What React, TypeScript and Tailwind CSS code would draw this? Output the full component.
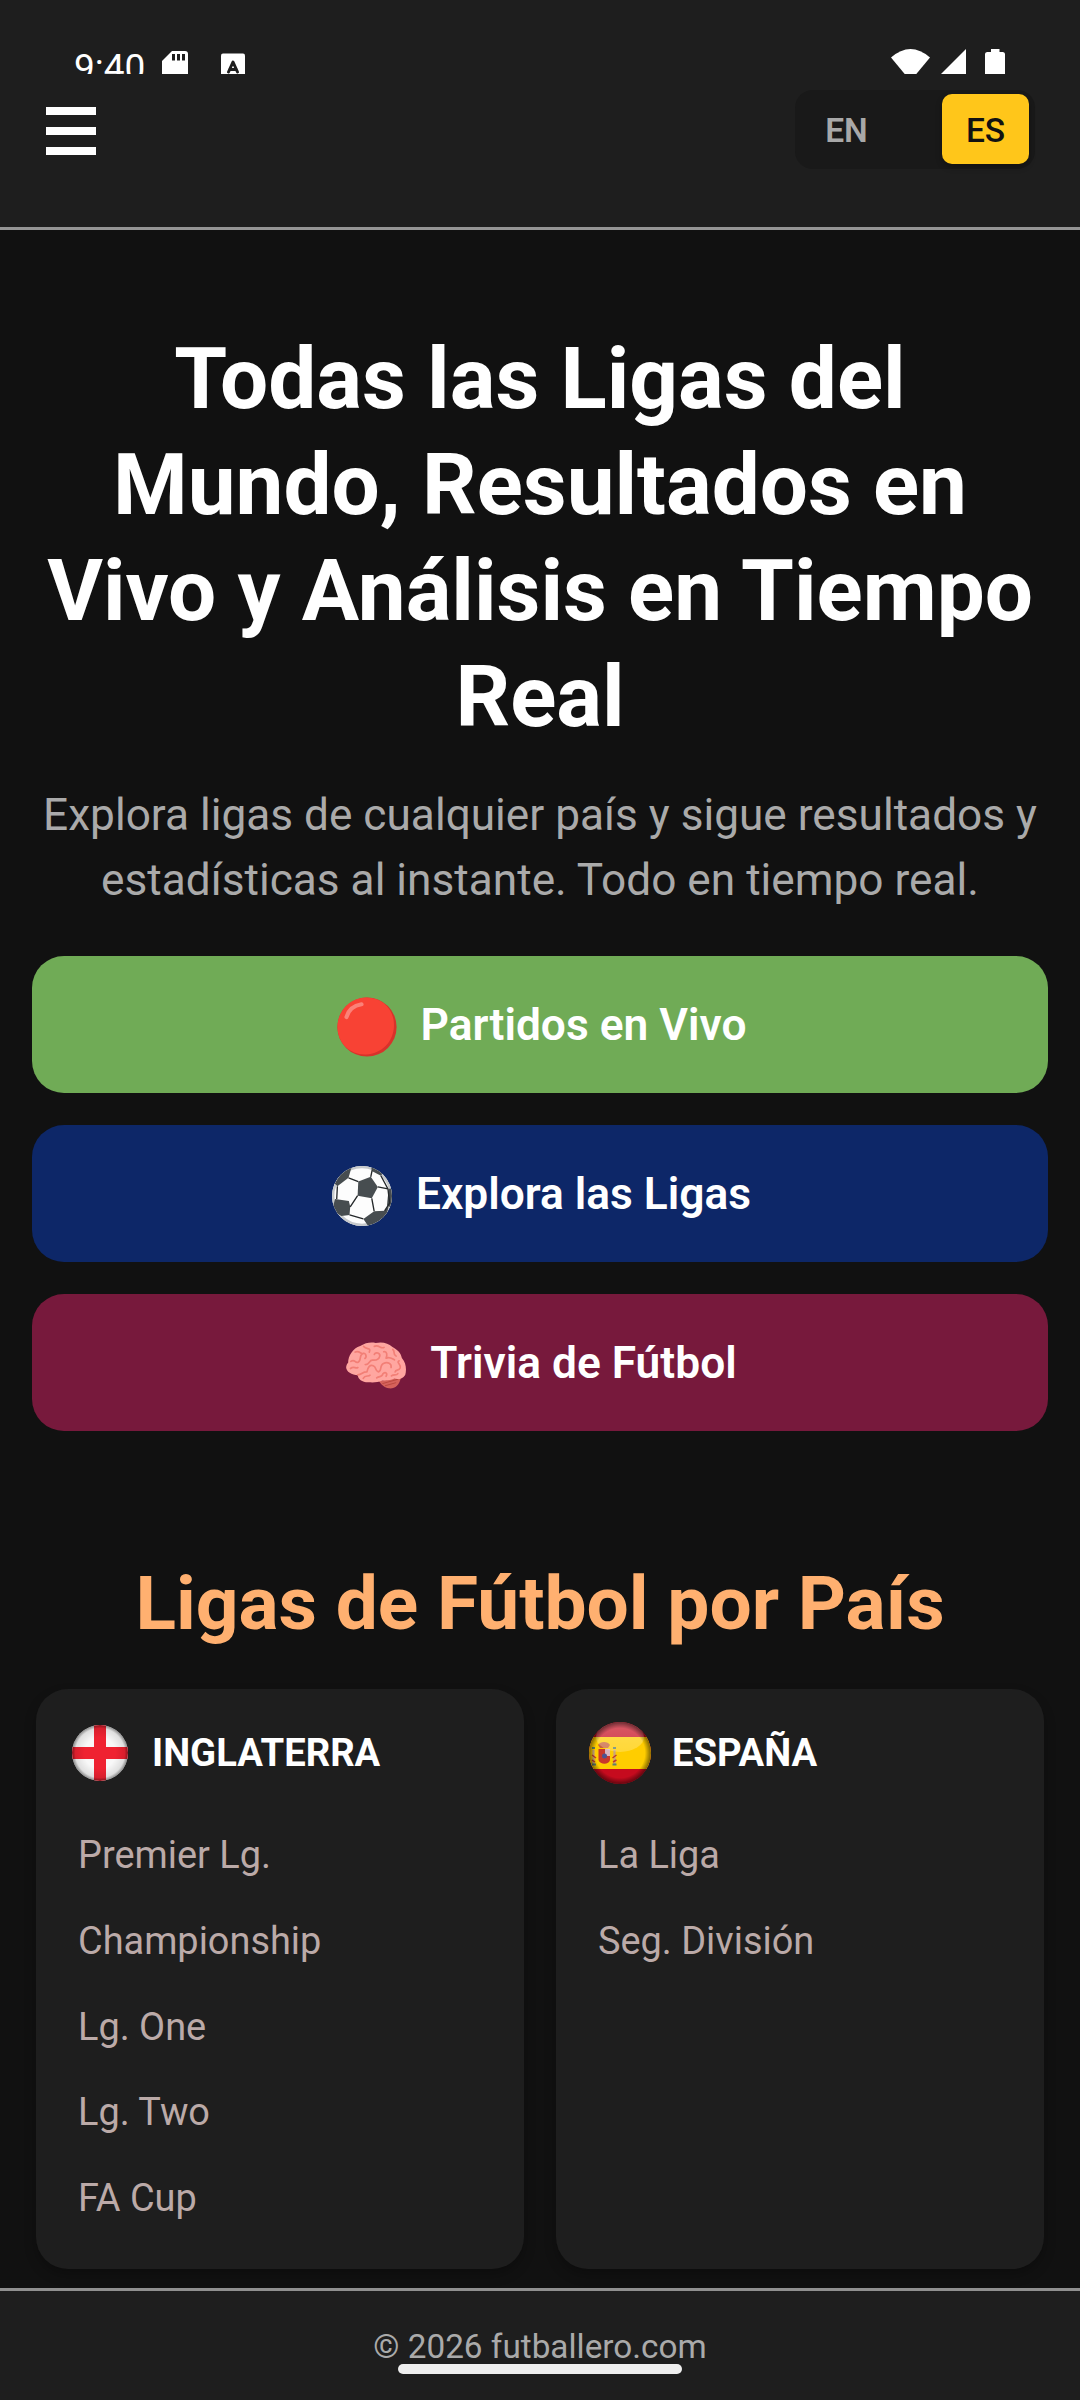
import { useState } from "react";

interface Country {
  name: string;
  flag: React.ReactNode;
  leagues: string[];
}

const RedCircleIcon = () => (
  <svg viewBox="0 0 60 60" className="size-[60px]">
    <circle cx="30" cy="30" r="29.6" fill="#d8322b" />
    <path d="M28.500 0.500C45 0 57 12 57 28C57 45 44 57 29 57.500C13 58 .5 46 .5 30C.5 14 13 .8 28.500 .5Z" fill="#f84234" />
    <path d="M9.500 20C11.500 13 17 8.500 24.500 7.300" stroke="#fb8178" strokeWidth="4.200" strokeLinecap="round" fill="none" />
  </svg>
);

const BallIcon = () => (
  <svg viewBox="0 0 178 178" className="size-[60px]">
    <defs>
      <clipPath id="ball">
        <circle cx="89" cy="89" r="89" />
      </clipPath>
    </defs>
    <g clipPath="url(#ball)">
      <rect width="178" height="178" fill="#fdfdfd" />
      <circle cx="89" cy="89" r="86" fill="none" stroke="#c6c9cb" strokeWidth="8" />
      <g fill="#474d50">
        <path d="M78 46L115 32L136 62L118 96L76 88Z" />
        <path d="M9 98L50 104L54 121L52 145L28 148L0 132Z" />
        <path d="M8 52L30 17L58 4L49 35L16 60Z" />
        <path d="M93 157L125 134L156 133L168 118L160 158L110 182Z" />
        <path d="M116 0L118 15L145 29L150 22L140 0Z" />
        <path d="M168 68L180 66V125L163 117Z" />
      </g>
      <path d="M49 35L78 46M54 121L76 88M118 96L125 134M136 62L166 68M115 32L119 13M52 145L93 157M16 60L14 98M145 29L166 68L171 110L156 133" stroke="#24282a" strokeWidth="4" fill="none" />
    </g>
  </svg>
);

const BrainIcon = () => (
  <svg viewBox="0 0 178 140" className="h-[47px] w-[60px]">
    <path d="M98 116L164 104C158 130 145 140 127 138C116 137 103 126 98 116Z" fill="#d5625b" />
    <path d="M108 124L154 111M116 130L149 121" stroke="#b9483f" strokeWidth="3" />
    <path
      d="M6 62C6 42 20 18 42 12C58 2 74 0 88 3C108-2 126 4 137 14C154 23 164 34 166 48C180 64 180 84 176 98C168 110 155 112 144 109C130 116 117 114 108 115C94 121 80 121 66 120C47 120 35 110 35 99C17 98 0 88 0 75C1 69 3 65 6 62Z"
      fill="#ffa6a0"
    />
    <g fill="none" stroke="#f27f76" strokeWidth="5" strokeLinecap="round" strokeLinejoin="round">
      <path d="M35 98C48 96 50 88 62 89C64 76 71 66 81 71C92 76 85 86 96 89C108 87 98 70 111 64C124 58 136 64 134 76" />
      <path d="M14 58C26 48 26 65 36 60C46 56 38 40 49 35C58 30 63 44 56 49M27 30C40 24 44 38 51 34" />
      <path d="M52 13C62 24 75 15 69 30M57 67C70 69 68 53 79 54C91 55 98 52 100 43C103 33 88 28 84 37M84 13C98 7 103 22 113 16" />
      <path d="M112 29C122 27 123 39 119 48C130 43 136 49 144 53M139 22C148 31 137 35 149 42M158 56C148 61 165 66 161 77C157 87 148 81 146 89" />
      <path d="M13 79C24 70 28 81 35 76M51 108C57 96 67 105 71 99M91 107C99 99 106 108 110 94C118 88 124 94 119 102M135 101C142 95 150 101 154 94" />
    </g>
  </svg>
);

const EnglandFlag = () => (
  <svg viewBox="0 0 64 64" className="size-16">
    <defs>
      <clipPath id="eng">
        <circle cx="32" cy="32" r="28" />
      </clipPath>
      <radialGradient id="engShade">
        <stop offset="0.55" stopColor="#000" stopOpacity="0" />
        <stop offset="0.88" stopColor="#000" stopOpacity="0.1" />
        <stop offset="1" stopColor="#000" stopOpacity="0.45" />
      </radialGradient>
    </defs>
    <g clipPath="url(#eng)">
      <rect width="64" height="64" fill="#f8f8f8" />
      <path d="M26 0H38V64H26ZM0 26H64V38H0Z" fill="#ef2231" />
      <circle cx="32" cy="32" r="28" fill="url(#engShade)" />
    </g>
  </svg>
);

const SpainFlag = () => (
  <svg viewBox="0 0 64 64" className="size-16">
    <defs>
      <clipPath id="esp">
        <circle cx="32" cy="32" r="31" />
      </clipPath>
      <radialGradient id="espShade">
        <stop offset="0.8" stopColor="#000" stopOpacity="0" />
        <stop offset="1" stopColor="#000" stopOpacity="0.5" />
      </radialGradient>
      <linearGradient id="espGloss" x1="0" y1="0" x2="0" y2="1">
        <stop offset="0" stopColor="#fff" stopOpacity="0.32" />
        <stop offset="1" stopColor="#fff" stopOpacity="0.22" />
      </linearGradient>
    </defs>
    <g clipPath="url(#esp)">
      <rect width="64" height="64" fill="#c60b1e" />
      <rect y="16" width="64" height="32" fill="#ffcd00" />
      <g>
        <path d="M10 24C12 20 20 20 22 24L20 27H12Z" fill="#c8633a" />
        <path d="M10.500 28H22V39C21 44 12 44 10.500 39Z" fill="#c9372c" />
        <path d="M17 28H22V35H17Z" fill="#d9b3bd" />
        <circle cx="16.500" cy="35" r="2.500" fill="#4d5290" />
        <path d="M5.500 29V43M26.500 29V43" stroke="#c9a27c" strokeWidth="2.200" />
        <path d="M4 34L8 37M4 39L7 41M24.500 37L28.500 34M25 41L28.500 39" stroke="#c0392b" strokeWidth="1.500" />
        <path d="M4 27H7M25 27H28M4 43.500H8M24.500 43.500H28.500" stroke="#5f7f6a" strokeWidth="2" />
      </g>
      <ellipse cx="32" cy="16" rx="24" ry="15" fill="url(#espGloss)" />
      <circle cx="32" cy="32" r="31" fill="url(#espShade)" />
    </g>
  </svg>
);

const COUNTRIES: Country[] = [
  {
    name: "INGLATERRA",
    flag: <EnglandFlag />,
    leagues: ["Premier Lg.", "Championship", "Lg. One", "Lg. Two", "FA Cup"],
  },
  {
    name: "ESPAÑA",
    flag: <SpainFlag />,
    leagues: ["La Liga", "Seg. División"],
  },
];

const ACTIONS = [
  { label: "Partidos en Vivo", icon: <RedCircleIcon />, color: "bg-[#70ab56]" },
  { label: "Explora las Ligas", icon: <BallIcon />, color: "bg-[#0d2768]" },
  { label: "Trivia de Fútbol", icon: <BrainIcon />, color: "bg-[#77193c]" },
];

// the header covers the lower part of the status bar
const StatusBar = () => (
  <div className="flex h-[74px] items-start justify-between overflow-hidden pl-[74px] pr-[75px] text-white">
    <div className="flex">
      <span className="mt-[46px] w-[88px] text-[37px] leading-[43px]">9:40</span>
      <svg viewBox="0 0 26 34" className="mt-[51px] h-[34px] w-[26px]">
        <path d="M10 0H23Q26 0 26 3V34H0V10Z" fill="#fff" />
        <path d="M10 3H13V9.500H10ZM15 3H18V9.500H15ZM20 3H23V9.500H20Z" fill="#1e1e1e" />
      </svg>
      <svg viewBox="0 0 24 30" className="ml-[33px] mt-[53px] h-[30px] w-6">
        <rect width="24" height="30" y="0.500" rx="2" fill="#fff" />
        <path d="M7.500 19L12 9L16.500 19M8.500 16.500H15.500" stroke="#1e1e1e" strokeWidth="3" fill="none" strokeLinejoin="round" strokeLinecap="round" />
      </svg>
    </div>
    <div className="mt-[49px] flex">
      <svg viewBox="0 0 39 31" className="h-[31px] w-[39px]">
        <path d="M0 8.500Q19.500 -8.500 39 8.500L19.500 32Z" fill="#fff" />
      </svg>
      <svg viewBox="0 0 25 25" className="ml-[11px] size-[25px]">
        <path d="M25 0V25H0Z" fill="#fff" />
      </svg>
      <svg viewBox="0 0 20 32" className="ml-[19px] h-8 w-5">
        <path d="M6 0H14.500V3H18Q20 3.500 20 5V32H0V5Q0 3.500 2 3H6Z" fill="#fff" />
      </svg>
    </div>
  </div>
);

const Header = () => {
  const [lang, setLang] = useState("ES");

  return (
    <header className="h-[230px] border-b-[3px] border-[#959595] bg-[#1e1e1e]">
      <StatusBar />
      <div className="flex justify-between pl-[46px] pr-[45px]">
        <button className="mt-[33px] flex h-12 w-[50px] flex-col gap-3">
          <span className="h-2 w-full bg-white" />
          <span className="h-2 w-full bg-white" />
          <span className="h-2 w-full bg-white" />
        </button>
        <div className="mt-4 flex h-[79px] w-[240px] justify-between rounded-[18px] bg-[#191919] px-[6px] pt-1 text-[33.500px] font-medium">
          {["EN", "ES"].map((l) => (
            <button
              key={l}
              onClick={() => setLang(l)}
              className={
                lang === l
                  ? "h-[70px] w-[87px] rounded-[10px] bg-[#ffc61a] pt-[5px] text-[#111] shadow-[0_3px_6px_rgba(0,0,0,0.3)]"
                  : "h-[70px] w-[91px] rounded-[10px] pt-[5px] font-semibold text-[#a8a8a8]"
              }
            >
              {l}
            </button>
          ))}
        </div>
      </div>
    </header>
  );
};

const CountryCard = ({ name, flag, leagues }: Country) => (
  <div className="h-[580px] flex-1 rounded-[32px] bg-[#1e1e1e] px-8 pt-8 shadow-[0_6px_12px_rgba(0,0,0,0.25)]">
    <div className="flex h-16 items-center gap-5">
      {flag}
      <h3 className="pt-[3px] text-[38.200px] font-bold text-white">{name}</h3>
    </div>
    <ul className="mt-[28.500px] pl-[10px] text-[37.900px] leading-[85.700px] text-[#bbaaa8]">
      {leagues.map((league) => (
        <li key={league}>{league}</li>
      ))}
    </ul>
  </div>
);

const App = () => {
  return (
    <div className="flex h-[2400px] w-[1080px] flex-col overflow-hidden bg-[#111] font-['Roboto',sans-serif]">
      <Header />
      <main className="flex flex-1 flex-col">
        <h1 className="mt-[97px] text-center text-[85.400px] font-bold leading-[105.900px] text-white">
          Todas las Ligas del
          <br />
          Mundo, Resultados en
          <br />
          Vivo y Análisis en Tiempo
          <br />
          Real
        </h1>
        <p className="mt-8 text-center text-[44.200px] leading-[65px] text-[#aaa]">
          Explora ligas de cualquier país y sigue resultados y
          <br />
          estadísticas al instante. Todo en tiempo real.
        </p>
        <div className="mt-[43px] flex flex-col gap-8 px-8">
          {ACTIONS.map(({ label, icon, color }) => (
            <button
              key={label}
              className={`flex h-[137px] items-center justify-center gap-6 rounded-[32px] pl-[3px] text-[44.300px] font-semibold text-white ${color}`}
            >
              <span className="pt-[6px]">{icon}</span>
              <span className="pt-[3px]">{label}</span>
            </button>
          ))}
        </div>
        <h2 className="mt-[128px] text-center text-[74.900px] font-bold leading-[90px] text-[#ffb070]">
          Ligas de Fútbol por País
        </h2>
        <div className="mt-10 flex gap-8 px-9">
          {COUNTRIES.map((country) => (
            <CountryCard key={country.name} {...country} />
          ))}
        </div>
      </main>
      <footer className="flex h-28 flex-col items-center border-t-[3px] border-[#909090] bg-[#1e1e1e] pt-[38px]">
        <p className="text-[33.300px] leading-[35px] text-[#aaa]">© 2026 futballero.com</p>
        <div className="h-[10px] w-[284px] rounded-full bg-[#eee]" />
      </footer>
    </div>
  );
};

export default App;
